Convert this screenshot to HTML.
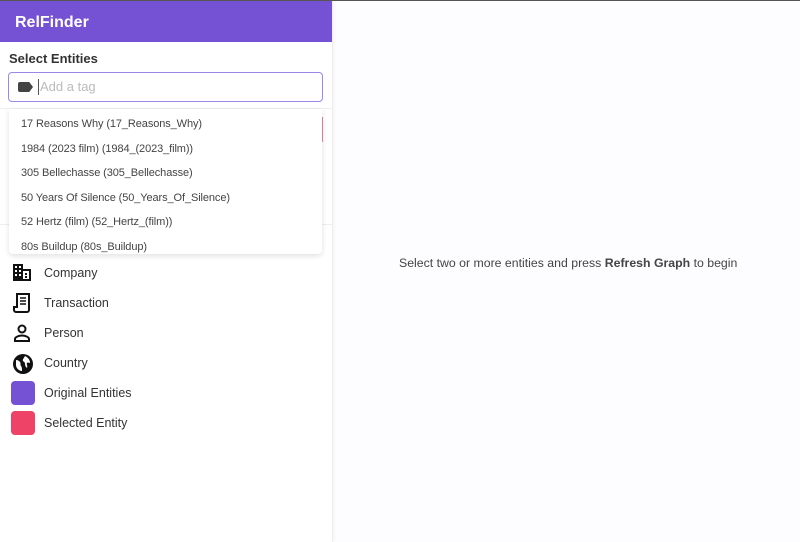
<!DOCTYPE html>
<html><head><style>
*{box-sizing:border-box;margin:0;padding:0}
body{width:800px;height:542px;overflow:hidden;font-family:"Liberation Sans",sans-serif;background:#fdfcfe;position:relative;color:#333}
.top{position:absolute;left:0;top:0;width:800px;height:1px;background:#555}
.side{position:absolute;left:0;top:1px;width:333px;height:541px;background:#fff;border-right:1px solid #eee;box-shadow:1px 0 3px rgba(0,0,0,.04)}
.hdr{height:41px;background:#7552d4;color:#fff;font-weight:bold;font-size:16px;padding:13px 15px}
.lbl{position:absolute;left:9px;top:51px;font-size:13px;font-weight:bold;color:#333}
.inp{position:absolute;left:8px;top:72px;width:315px;height:30px;border:1.5px solid #9d87e6;border-radius:4px;background:#fff}
.tag{position:absolute;left:9px;top:9px;width:15px;height:10px;background:#444;border-radius:2px 0 0 2px;clip-path:polygon(0 0,75% 0,100% 50%,75% 100%,0 100%)}
.ph{position:absolute;left:29px;top:6px;font-size:13px;color:#bbb;border-left:1px solid #555;padding-left:1px;height:16px;line-height:16px}
.hl{position:absolute;left:0;width:332px;height:1px;background:#eee}
.pink{position:absolute;left:321px;top:117px;width:2px;height:25px;background:#e8839a}
.dd{position:absolute;left:9px;top:109px;width:313px;height:145px;background:#fff;box-shadow:0 2px 6px rgba(0,0,0,.12);border-radius:0 0 4px 4px;overflow:hidden}
.dd div{height:24.6px;font-size:11px;color:#444;padding-left:12px;line-height:24.6px;letter-spacing:-0.1px}
.dd div:first-child{margin-top:3px}
.leg{position:absolute;left:11px;font-size:12.5px;color:#333}
.leg svg,.leg .sw{position:absolute;left:0;top:0}
.leg span{position:absolute;left:33px;top:4px;white-space:nowrap}
.sw{width:24px;height:24px;border-radius:4px}
.msg{position:absolute;left:399px;top:256px;font-size:12.3px;color:#444}
</style></head><body>
<div class="top"></div>
<div class="side">
<div class="hdr">RelFinder</div>
</div>
<div class="lbl">Select Entities</div>
<div class="inp"><div class="tag"></div><div class="ph">Add a tag</div></div>
<div class="hl" style="top:108px"></div>
<div class="hl" style="top:224px"></div>
<div class="pink"></div>
<div class="dd">
<div>17 Reasons Why (17_Reasons_Why)</div>
<div>1984 (2023 film) (1984_(2023_film))</div>
<div>305 Bellechasse (305_Bellechasse)</div>
<div>50 Years Of Silence (50_Years_Of_Silence)</div>
<div>52 Hertz (film) (52_Hertz_(film))</div>
<div>80s Buildup (80s_Buildup)</div>
</div>
<div class="leg" style="top:262px"><svg width="22" height="20" viewBox="0 0 22 20"><path d="M2 2h10v5h8v12H2z" fill="#111"/><g fill="#fff"><rect x="4" y="4" width="2" height="2"/><rect x="8" y="4" width="2" height="2"/><rect x="4" y="8" width="2" height="2"/><rect x="8" y="8" width="2" height="2"/><rect x="4" y="12" width="2" height="2"/><rect x="8" y="12" width="2" height="2"/><rect x="12" y="9" width="6" height="8"/></g><rect x="14" y="11" width="2" height="2" fill="#111"/><rect x="14" y="14" width="2" height="2" fill="#111"/></svg><span>Company</span></div>
<div class="leg" style="top:292px"><svg width="22" height="22" viewBox="0 0 22 22"><path d="M6 2h12v16a2 2 0 0 1-2 2H5a2 2 0 0 1-2-2v-3h3z" fill="none" stroke="#111" stroke-width="2"/><path d="M9 6h6M9 9h6M9 12h6" stroke="#111" stroke-width="1.6"/></svg><span>Transaction</span></div>
<div class="leg" style="top:322px"><svg width="22" height="22" viewBox="0 0 22 22"><circle cx="11" cy="7" r="3.5" fill="none" stroke="#111" stroke-width="2"/><path d="M4 19v-2c0-2 4-3.5 7-3.5s7 1.5 7 3.5v2z" fill="none" stroke="#111" stroke-width="2"/></svg><span>Person</span></div>
<div class="leg" style="top:352px"><svg width="24" height="24" viewBox="0 0 24 24"><circle cx="12" cy="12" r="10" fill="#111"/><path d="M5 8c2 0 3 1 4 2s0 3 1 4 1 3 1 5c-3 0-6-3-6-6 0-2 0-3 0-5zM14 4c2 1 5 3 5 7-1 0-2-1-3 0s1 3 0 5c-1-1-2-2-2-4s-1-2-2-3 1-3 2-5z" fill="#fff"/></svg><span>Country</span></div>
<div class="leg" style="top:381px"><div class="sw" style="background:#7552d4"></div><span style="top:5px">Original Entities</span></div>
<div class="leg" style="top:411px"><div class="sw" style="background:#ee4266"></div><span style="top:5px">Selected Entity</span></div>
<div class="msg">Select two or more entities and press <b>Refresh Graph</b> to begin</div>
</body></html>
